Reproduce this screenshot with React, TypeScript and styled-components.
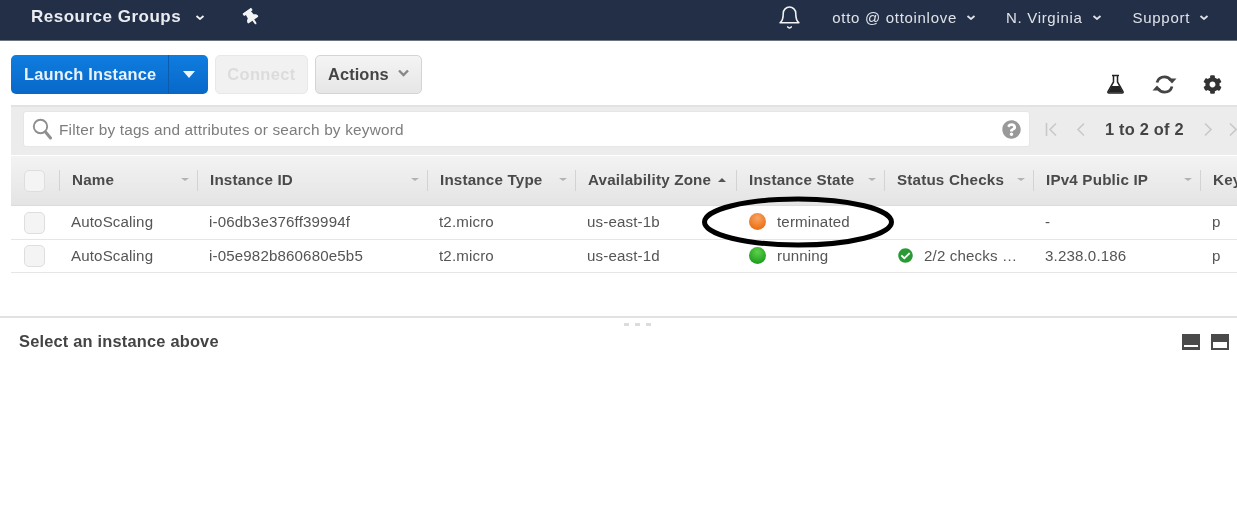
import React from 'react'
import styled, { createGlobalStyle } from 'styled-components'
import { FaThumbtack, FaCog, FaCheckCircle, FaQuestionCircle } from 'react-icons/fa'
import { FiBell } from 'react-icons/fi'

const GlobalStyle = createGlobalStyle`
  html, body {
    margin: 0;
    padding: 0;
    background: #fff;
    font-family: "Liberation Sans", Arial, sans-serif;
    overflow: hidden;
  }
`

const columns = [
  { title: 'Name', width: 138 },
  { title: 'Instance ID', width: 230 },
  { title: 'Instance Type', width: 148 },
  { title: 'Availability Zone', width: 161, sorted: true },
  { title: 'Instance State', width: 148 },
  { title: 'Status Checks', width: 149 },
  { title: 'IPv4 Public IP', width: 167 },
  { title: 'Key', width: 60 },
]

const rows = [
  {
    name: 'AutoScaling',
    id: 'i-06db3e376ff39994f',
    type: 't2.micro',
    zone: 'us-east-1b',
    state: 'terminated',
    checks: '',
    ip: '-',
  },
  {
    name: 'AutoScaling',
    id: 'i-05e982b860680e5b5',
    type: 't2.micro',
    zone: 'us-east-1d',
    state: 'running',
    checks: '2/2 checks …',
    ip: '3.238.0.186',
  },
]

const Page = styled.div`
  position: relative;
  width: 1237px;
  height: 516px;
  overflow: hidden;
  background: #fff;
  filter: blur(0.35px);
`

const TopBar = styled.div`
  height: 41px;
  background: #232f47;
  display: flex;
  align-items: center;
  padding: 0 28px 6px 31px;
  box-sizing: border-box;
  color: #f1f3f6;
  border-bottom: 1px solid #6c7482;
`

const BrandLabel = styled.span`
  font-size: 17px;
  font-weight: 700;
  letter-spacing: 0.5px;
  color: #e9ecf0;
`

const PinIcon = styled(FaThumbtack)`
  font-size: 17px;
  color: #f2f3f5;
  margin-left: 37px;
  transform: rotate(-35deg);
`

const Spacer = styled.div`
  flex: 1;
`

const BellIcon = styled(FiBell)`
  font-size: 25px;
  stroke-width: 1.5;
  color: #f1f3f6;
  margin-right: 30px;
`

const NavItem = styled.span`
  font-size: 15px;
  letter-spacing: 0.7px;
  color: #dfe3e9;
  margin-left: ${p => p.$gap}px;
  display: flex;
  align-items: center;
  white-space: nowrap;
`

const NavCaret = styled.svg`
  width: ${p => p.$size || 10}px;
  height: 5px;
  margin-left: ${p => p.$gap || 9}px;
`

const Toolbar = styled.div`
  height: 64px;
  box-sizing: border-box;
  padding: 14px 15px 0 11px;
  display: flex;
  align-items: flex-start;
`

const LaunchButton = styled.div`
  width: 197px;
  height: 39px;
  border-radius: 5px;
  background: linear-gradient(#0f7de0, #0868c8);
  display: flex;
  color: #e9f2fb;
  font-size: 16.4px;
  letter-spacing: 0.2px;
  font-weight: 700;
`

const LaunchLabel = styled.div`
  width: 158px;
  padding-left: 13px;
  box-sizing: border-box;
  line-height: 39px;
  border-right: 1px solid #0a5cae;
  white-space: nowrap;
`

const LaunchCaret = styled.div`
  flex: 1;
  display: flex;
  align-items: center;
  justify-content: center;

  &::after {
    content: '';
    border-left: 6.5px solid transparent;
    border-right: 6.5px solid transparent;
    border-top: 7px solid #eef5fc;
  }
`

const GrayButton = styled.div`
  height: 39px;
  box-sizing: border-box;
  width: ${p => p.$width}px;
  margin-left: ${p => p.$gap}px;
  border-radius: 5px;
  border: 1px solid ${p => (p.$disabled ? '#e8e8e8' : '#d4d4d4')};
  background: ${p => (p.$disabled ? '#f1f1f1' : 'linear-gradient(#f4f4f4, #e6e6e6)')};
  color: ${p => (p.$disabled ? '#dcdcdc' : '#444')};
  font-size: 16.4px;
  letter-spacing: ${p => (p.$disabled ? 0.4 : 0.1)}px;
  font-weight: 700;
  display: flex;
  align-items: center;
  justify-content: ${p => (p.$disabled ? 'center' : 'flex-start')};
  padding-left: ${p => (p.$disabled ? 0 : 12)}px;
`

const ActionsCaret = styled.svg`
  width: 11px;
  height: 8px;
  margin: -3px 0 0 9px;
`

const ToolIcons = styled.div`
  margin-left: auto;
  margin-top: 19px;
  display: flex;
  align-items: center;
  color: #333;
`

const ToolIcon = styled.div`
  margin-left: ${p => p.$gap}px;
  display: flex;
  font-size: ${p => p.$size}px;
`

const Content = styled.div`
  margin-left: 11px;
`

const FilterBand = styled.div`
  height: 50px;
  box-sizing: border-box;
  background: #ececec;
  border-top: 2px solid #e2e2e2;
  padding: 4px 0 0 12px;
  display: flex;
  align-items: flex-start;
`

const SearchBox = styled.div`
  width: 1007px;
  height: 36px;
  flex: none;
  box-sizing: border-box;
  background: #fff;
  border: 1px solid #e6e6e6;
  border-radius: 3px;
  display: flex;
  align-items: center;
  padding: 0 8px 0 8px;
`

const SearchPlaceholder = styled.span`
  font-size: 15.4px;
  letter-spacing: 0.17px;
  color: #7d7d7d;
  margin-left: 6px;
  padding-top: 1px;
  flex: 1;
  white-space: nowrap;
`

const HelpIcon = styled(FaQuestionCircle)`
  font-size: 19px;
  color: #999;
`

const Pager = styled.div`
  height: 36px;
  flex: none;
  display: flex;
  align-items: center;
  margin-left: 15px;
  color: #444;
  white-space: nowrap;
`

const PagerGlyph = styled.svg`
  width: ${p => p.$width || 9}px;
  height: 15px;
  margin-right: ${p => p.$gap}px;
`

const PagerText = styled.span`
  font-size: 16.4px;
  letter-spacing: 0.2px;
  font-weight: 700;
  margin-right: 20px;
`

const HeaderRow = styled.div`
  height: 51px;
  box-sizing: border-box;
  display: flex;
  background: linear-gradient(#f3f3f3, #e4e4e4);
  border-top: 1px solid #fff;
  border-bottom: 1px solid #dcdcdc;
  white-space: nowrap;
`

const CheckCell = styled.div`
  width: 48px;
  flex: none;
  display: flex;
  align-items: center;
  padding-left: 13px;
  box-sizing: border-box;
`

const CheckBox = styled.div`
  width: 21px;
  height: 22px;
  box-sizing: border-box;
  border: 1px solid #dedede;
  border-radius: 5px;
  background: #f4f4f4;
`

const HeaderCell = styled.div`
  width: ${p => p.$width}px;
  flex: none;
  box-sizing: border-box;
  padding: 0 8px 2px 13px;
  display: flex;
  align-items: center;
  position: relative;
  font-size: 15.2px;
  letter-spacing: 0.18px;
  font-weight: 700;
  color: #4a4a4a;

  &::before {
    content: '';
    position: absolute;
    left: 0;
    top: 14px;
    height: 21px;
    width: 1px;
    background: #d3d3d3;
  }
`

const SortCaret = styled.span`
  margin-left: ${p => (p.$sorted ? '7px' : 'auto')};
  border-left: 4px solid transparent;
  border-right: 4px solid transparent;
  ${p => (p.$sorted ? 'border-bottom: 4px solid #555;' : 'border-top: 3px solid #b2b2b2;')}
`

const DataRow = styled.div`
  height: ${p => p.$height}px;
  box-sizing: border-box;
  display: flex;
  align-items: center;
  border-bottom: 1px solid #e5e5e5;
  white-space: nowrap;
`

const DataCell = styled.div`
  width: ${p => p.$width}px;
  flex: none;
  box-sizing: border-box;
  padding: 0 0 2px 12px;
  display: flex;
  align-items: center;
  font-size: 15.1px;
  letter-spacing: 0.15px;
  color: #555;
`

const StateDot = styled.span`
  width: 17px;
  height: 17px;
  border-radius: 50%;
  margin: 0 11px 0 1px;
  background: ${p =>
    p.$state === 'running'
      ? 'radial-gradient(circle at 50% 30%, #5fd04a, #1f9f1f 75%)'
      : 'radial-gradient(circle at 50% 30%, #f7a565, #ee6f14 75%)'};
`

const CheckIcon = styled(FaCheckCircle)`
  font-size: 15px;
  color: #2a9a35;
  margin: 0 11px 0 2px;
`

const Rows = styled.div`
  height: 110px;
  box-sizing: border-box;
`

const DetailPane = styled.div`
  border-top: 2px solid #e2e2e2;
  margin-left: -11px;
  position: relative;
  padding: 14px 8px 0 19px;
  display: flex;
  align-items: center;
`

const DetailTitle = styled.div`
  font-size: 16.4px;
  letter-spacing: 0.2px;
  font-weight: 700;
  color: #444;
`

const Grip = styled.div`
  position: absolute;
  top: 5px;
  left: 624px;
  width: 32px;
  height: 3px;
  background: repeating-linear-gradient(90deg, #dcdcdc 0 5px, transparent 5px 11px);
`

const PaneIcons = styled.div`
  margin-left: auto;
  display: flex;
  gap: 11px;
`

const PaneIcon = styled.svg`
  width: 18px;
  height: 16px;
`

const Highlight = styled.svg`
  position: absolute;
  left: 700px;
  top: 194px;
  width: 197px;
  height: 56px;
  pointer-events: none;
`

const Caret = ({ gap, size }: { gap?: number; size?: number }) => (
  <NavCaret $gap={gap} $size={size} viewBox="0 0 10 5">
    <path d="M1.5 1L5 4l3.5-3" fill="none" stroke="currentColor" strokeWidth="1.8" />
  </NavCaret>
)

const FlaskIcon = () => (
  <svg width="19" height="20" viewBox="0 0 19 20">
    <path d="M6 1.5h7M7.5 2v6L2 17.5c-.4.8 0 1.5.9 1.5h13.2c.9 0 1.3-.7.9-1.5L11.5 8V2" fill="none" stroke="#222" strokeWidth="1.5" />
    <path d="M5.6 12h7.8l3.4 6.6H2.2z" fill="#222" />
  </svg>
)

const SyncIcon = () => (
  <svg width="25" height="19" viewBox="0 0 25 19">
    <path d="M5 7.5C6 3.8 9 1.8 12.5 1.8c2.6 0 5 1.2 6.3 3.4" fill="none" stroke="#444" strokeWidth="2.8" />
    <path d="M15.5 8.5h9l-4.5-5z" fill="#444" transform="rotate(180 20 6)" />
    <path d="M20 11.5c-1 3.7-4 5.7-7.5 5.7-2.6 0-5-1.2-6.3-3.4" fill="none" stroke="#444" strokeWidth="2.8" />
    <path d="M.5 10.5h9l-4.5 5z" fill="#444" transform="rotate(180 5 13)" />
  </svg>
)

const SearchGlyph = () => (
  <svg width="21" height="22" viewBox="0 0 21 22">
    <circle cx="8.5" cy="8.5" r="6.7" fill="none" stroke="#8f8f8f" strokeWidth="1.9" />
    <path d="M13.5 14l5 6" stroke="#8f8f8f" strokeWidth="3" strokeLinecap="round" />
  </svg>
)

export default function App() {
  return (
    <Page>
      <GlobalStyle />
      <TopBar>
        <BrandLabel>Resource Groups</BrandLabel>
        <Caret gap={13} size={12} />
        <PinIcon />
        <Spacer />
        <BellIcon />
        <NavItem $gap={0}>otto @ ottoinlove<Caret /></NavItem>
        <NavItem $gap={30}>N. Virginia<Caret /></NavItem>
        <NavItem $gap={31}>Support<Caret /></NavItem>
      </TopBar>

      <Toolbar>
        <LaunchButton>
          <LaunchLabel>Launch Instance</LaunchLabel>
          <LaunchCaret />
        </LaunchButton>
        <GrayButton $disabled $width={93} $gap={7}>Connect</GrayButton>
        <GrayButton $width={107} $gap={7}>
          Actions
          <ActionsCaret viewBox="0 0 11 8">
            <path d="M1 1.5l4.5 4.5L10 1.5" fill="none" stroke="#888" strokeWidth="2.4" />
          </ActionsCaret>
        </GrayButton>
        <ToolIcons>
          <ToolIcon $size={19} $gap={0}><FlaskIcon /></ToolIcon>
          <ToolIcon $size={20} $gap={27}><SyncIcon /></ToolIcon>
          <ToolIcon $size={19} $gap={26}><FaCog /></ToolIcon>
        </ToolIcons>
      </Toolbar>

      <Content>
        <FilterBand>
          <SearchBox>
            <SearchGlyph />
            <SearchPlaceholder>Filter by tags and attributes or search by keyword</SearchPlaceholder>
            <HelpIcon />
          </SearchBox>
          <Pager>
            <PagerGlyph $width={13} $gap={18} viewBox="0 0 13 15">
              <path d="M1.5 1v13M11 1.5L5 7.5l6 6" fill="none" stroke="#c8c8c8" strokeWidth="1.6" />
            </PagerGlyph>
            <PagerGlyph $gap={20} viewBox="0 0 9 15">
              <path d="M8 1.5L2 7.5l6 6" fill="none" stroke="#c8c8c8" strokeWidth="1.6" />
            </PagerGlyph>
            <PagerText>1 to 2 of 2</PagerText>
            <PagerGlyph $gap={16} viewBox="0 0 9 15">
              <path d="M1 1.5l6 6-6 6" fill="none" stroke="#c8c8c8" strokeWidth="1.6" />
            </PagerGlyph>
            <PagerGlyph $gap={0} viewBox="0 0 9 15">
              <path d="M1 1.5l6 6-6 6" fill="none" stroke="#c8c8c8" strokeWidth="1.6" />
            </PagerGlyph>
          </Pager>
        </FilterBand>

        <HeaderRow>
          <CheckCell><CheckBox /></CheckCell>
          {columns.map(col => (
            <HeaderCell key={col.title} $width={col.width}>
              {col.title}
              {col.title !== 'Key' && <SortCaret $sorted={col.sorted} />}
            </HeaderCell>
          ))}
        </HeaderRow>

        <Rows>
          {rows.map((row, i) => (
            <DataRow key={row.id} $height={i === 0 ? 34 : 33}>
              <CheckCell><CheckBox /></CheckCell>
              <DataCell $width={138}>{row.name}</DataCell>
              <DataCell $width={230}>{row.id}</DataCell>
              <DataCell $width={148}>{row.type}</DataCell>
              <DataCell $width={161}>{row.zone}</DataCell>
              <DataCell $width={148}>
                <StateDot $state={row.state} />
                {row.state}
              </DataCell>
              <DataCell $width={149}>
                {row.checks && <CheckIcon />}
                {row.checks}
              </DataCell>
              <DataCell $width={167}>{row.ip}</DataCell>
              <DataCell $width={60}>p</DataCell>
            </DataRow>
          ))}
        </Rows>

        <DetailPane>
          <Grip />
          <DetailTitle>Select an instance above</DetailTitle>
          <PaneIcons>
            <PaneIcon viewBox="0 0 18 16">
              <path d="M0 0h18v16H0z" fill="#4a4a4a" />
              <path d="M2 11h14v2H2z" fill="#fff" />
            </PaneIcon>
            <PaneIcon viewBox="0 0 18 16">
              <path d="M0 0h18v16H0z" fill="#4a4a4a" />
              <path d="M2 8h14v6H2z" fill="#fff" />
            </PaneIcon>
          </PaneIcons>
        </DetailPane>
      </Content>

      <Highlight viewBox="0 0 197 56">
        <ellipse cx="98" cy="28" rx="93.5" ry="23" fill="none" stroke="#000" strokeWidth="5" />
      </Highlight>
    </Page>
  )
}
